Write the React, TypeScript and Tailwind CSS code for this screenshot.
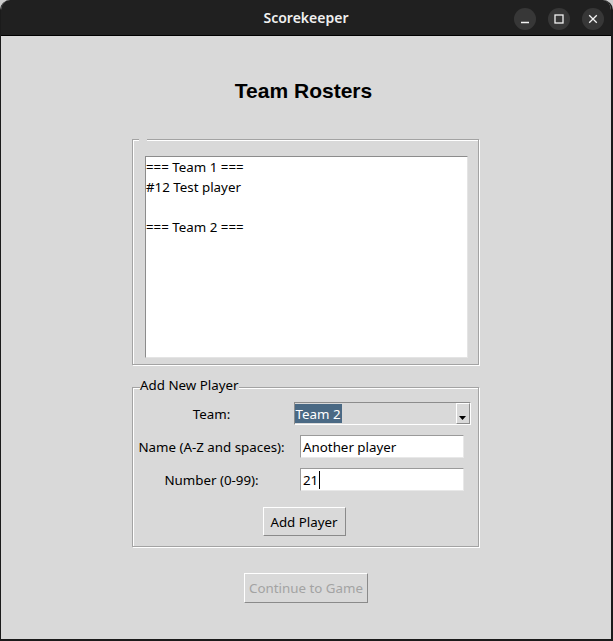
const roster = ["=== Team 1 ===", "#12 Test player", "", "=== Team 2 ==="];

function TitleButton({ children }: { children: React.ReactNode }) {
  return (
    <div className="flex h-[22px] w-[22px] items-center justify-center rounded-full bg-[#373737]">
      {children}
    </div>
  );
}

export default function App() {
  return (
    <div className="h-[641px] w-[613px] bg-[#cdcdcd] font-['Noto_Sans',sans-serif] text-[13.33px] text-black">
      <div className="flex h-full flex-col overflow-hidden rounded-t-[10px] border-b-2 border-l border-r-2 border-[#1b1b1b] bg-[#d9d9d9]">
        {/* Title bar */}
        <div className="relative flex h-[36px] shrink-0 items-center justify-center border-b border-black bg-[#202020]">
          <span className="text-[14px] font-semibold text-[#f0f0f0]">Scorekeeper</span>
          <div className="absolute right-[7px] top-[8px] flex gap-[12px]">
            <TitleButton>
              <svg width="10" height="10" viewBox="0 0 10 10">
                <path d="M1 8.5h8" stroke="#f2f2f2" strokeWidth="1.3" />
              </svg>
            </TitleButton>
            <TitleButton>
              <svg width="10" height="10" viewBox="0 0 10 10">
                <rect x="1" y="1" width="8" height="8" fill="none" stroke="#f2f2f2" strokeWidth="1.3" />
              </svg>
            </TitleButton>
            <TitleButton>
              <svg width="10" height="10" viewBox="0 0 10 10">
                <path d="M1.2 1.2l7.6 7.6M8.8 1.2l-7.6 7.6" stroke="#f2f2f2" strokeWidth="1.3" />
              </svg>
            </TitleButton>
          </div>
        </div>

        {/* Body */}
        <div className="flex flex-col">
          <h1 className="mt-[44px] pr-[5px] text-center font-['Liberation_Sans',Arial,sans-serif] text-[21px] font-bold leading-none">
            Team Rosters
          </h1>

          {/* Roster frame */}
          <div className="relative ml-[131px] mt-[38px] h-[226px] w-[347px] border border-[#a3a3a3] pl-[12px] pt-[16px] shadow-[inset_1px_1px_0_#ffffff,1px_1px_0_#ffffff]">
            <span className="absolute left-[6px] top-[-2px] h-[3px] w-[8px] bg-[#d9d9d9]" />
            <div className="h-[202px] w-[323px] border-b border-l border-r border-t border-b-[#e4e4e4] border-l-[#8c8c8c] border-r-[#e4e4e4] border-t-[#8c8c8c] bg-white">
              {roster.map((line, i) => (
                <div key={i} className="h-[20px] whitespace-pre leading-[20px]">
                  {line}
                </div>
              ))}
            </div>
          </div>

          {/* Add player frame */}
          <div className="relative ml-[131px] mt-[22px] w-[347px] border border-[#a3a3a3] pb-[10px] pt-[9px] shadow-[inset_1px_1px_0_#ffffff,1px_1px_0_#ffffff]">
            <span className="absolute left-[7px] top-[-12px] bg-[#d9d9d9] leading-[18px]">Add New Player</span>

            <div className="grid grid-cols-[157px_184px]">
              <div className="flex h-[33px] items-center justify-center leading-[18px]">Team:</div>
              <div className="flex h-[33px] items-center justify-center">
                <div className="flex h-[23px] w-[177px] items-stretch border border-b-[#ffffff] border-l-[#8c8c8c] border-r-[#ffffff] border-t-[#8c8c8c] bg-[#d9d9d9]">
                  <div className="flex flex-1 items-center py-[1px]">
                    <span className="flex h-full items-center bg-[#4a6984] px-[1px] leading-[18px] text-white">Team 2</span>
                  </div>
                  <div className="flex w-[14px] items-end justify-center border border-b-[#8c8c8c] border-l-[#ffffff] border-r-[#8c8c8c] border-t-[#ffffff] pb-[3px]">
                    <svg width="7" height="4" viewBox="0 0 7 4">
                      <path d="M0 0h7L3.5 4z" fill="#000" />
                    </svg>
                  </div>
                </div>
              </div>

              <div className="flex h-[33px] items-center justify-center leading-[18px]">Name (A-Z and spaces):</div>
              <div className="flex h-[33px] items-center justify-center">
                <div className="flex h-[23px] w-[164px] items-center border border-b-[#e8e8e8] border-l-[#9a9a9a] border-r-[#e8e8e8] border-t-[#9a9a9a] bg-white pl-[2px] leading-[18px]">
                  Another player
                </div>
              </div>

              <div className="flex h-[33px] items-center justify-center leading-[18px]">Number (0-99):</div>
              <div className="flex h-[33px] items-center justify-center">
                <div className="flex h-[23px] w-[164px] items-center border border-b-[#e8e8e8] border-l-[#9a9a9a] border-r-[#e8e8e8] border-t-[#9a9a9a] bg-white pl-[2px] leading-[18px]">
                  21
                  <span className="ml-[1px] h-[18px] w-[1px] bg-black" />
                </div>
              </div>
            </div>

            <div className="mt-[11px] flex justify-center pr-[3px]">
              <button className="h-[29px] w-[83px] border border-b-[#8a8a8a] border-l-white border-r-[#8a8a8a] border-t-white bg-[#d9d9d9] leading-[18px]">
                Add Player
              </button>
            </div>
          </div>

          <button className="ml-[243px] mt-[26px] h-[30px] w-[124px] border border-b-[#8a8a8a] border-l-white border-r-[#8a8a8a] border-t-white bg-[#d9d9d9] leading-[18px] text-[#a3a3a3]">
            Continue to Game
          </button>
        </div>
      </div>
    </div>
  );
}
